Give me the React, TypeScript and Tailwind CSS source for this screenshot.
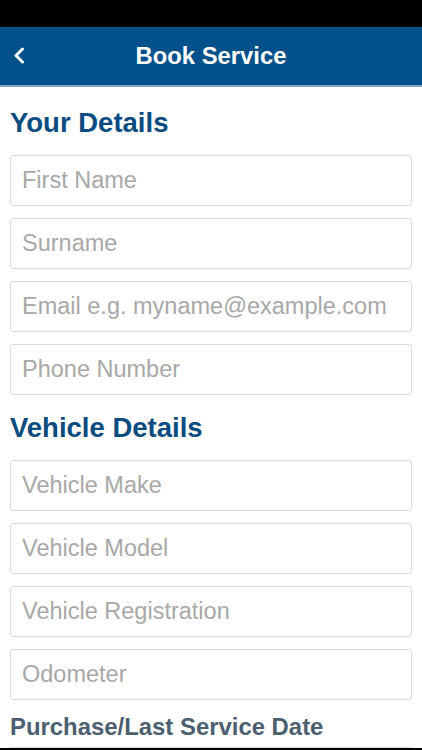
import React from "react";

const font = { fontFamily: '"Liberation Sans", Arial, Helvetica, sans-serif' };

function Field({ placeholder }: { placeholder: string }) {
  return (
    <div className="mx-[10px] h-[51px] flex items-center rounded-[3px] border border-[#dcdcdc] bg-white px-[11px]">
      <span className="text-[23.5px] text-[#a8a8a8] leading-none">{placeholder}</span>
    </div>
  );
}

export default function App() {
  return (
    <div className="w-[422px] h-[750px] overflow-hidden bg-white flex flex-col" style={font}>
      <div className="h-[27px] bg-black shrink-0" />
      <div className="h-[58px] bg-[#02518b] shrink-0 relative flex items-center justify-center">
        <svg className="absolute left-[13px] top-[20px]" width="12" height="17" viewBox="0 0 12 17">
          <path d="M9.5 2 L3 8.5 L9.5 15" fill="none" stroke="white" strokeWidth="3" strokeLinecap="round" strokeLinejoin="round" />
        </svg>
        <span className="text-white font-bold text-[23.8px] leading-none">Book Service</span>
      </div>
      <div className="h-[2px] bg-[#7aa3c6] shrink-0" />
      <div className="flex-1 flex flex-col">
        <h2 className="px-[10px] pt-[21px] pb-[17px] text-[27.5px] font-bold text-[#0a4b80] leading-[30px]">Your Details</h2>
        <div className="flex flex-col gap-[12px]">
          <Field placeholder="First Name" />
          <Field placeholder="Surname" />
          <Field placeholder="Email e.g. myname@example.com" />
          <Field placeholder="Phone Number" />
        </div>
        <h2 className="px-[10px] pt-[18px] pb-[17px] text-[27.5px] font-bold text-[#0a4b80] leading-[30px]">Vehicle Details</h2>
        <div className="flex flex-col gap-[12px]">
          <Field placeholder="Vehicle Make" />
          <Field placeholder="Vehicle Model" />
          <Field placeholder="Vehicle Registration" />
          <Field placeholder="Odometer" />
        </div>
        <h3 className="px-[10px] pt-[14px] text-[23.9px] font-bold text-[#4b5f70] leading-[26px]">Purchase/Last Service Date</h3>
        <div className="mt-[7px] mx-[10px] border-t border-[#dcdcdc]" />
        <div className="flex-1 bg-black" />
      </div>
    </div>
  );
}
